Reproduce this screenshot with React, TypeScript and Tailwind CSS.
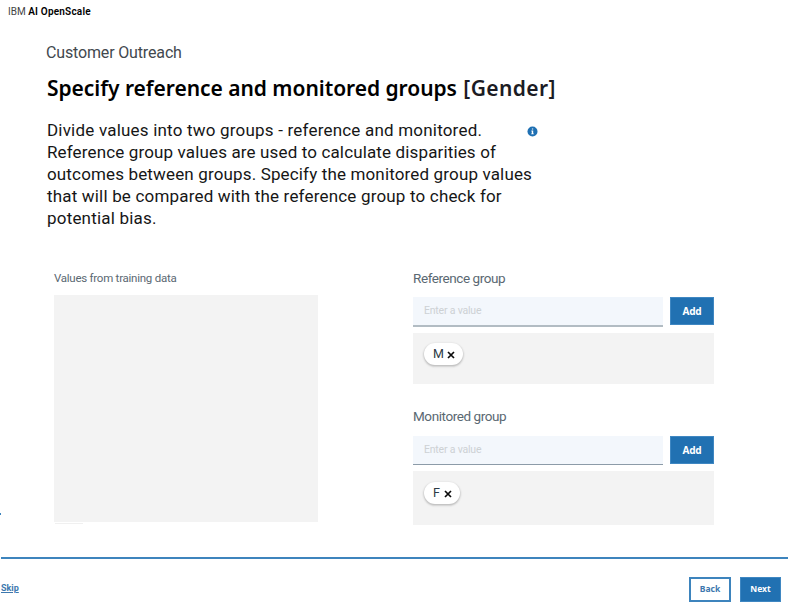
import React from "react";

const description = [
  { text: "Divide values into two groups - reference and monitored.", spacing: "tracking-[0.2px]" },
  { text: "Reference group values are used to calculate disparities of", spacing: "tracking-[0.14px]" },
  { text: "outcomes between groups. Specify the monitored group values", spacing: "tracking-[0.15px]" },
  { text: "that will be compared with the reference group to check for", spacing: "tracking-[0.18px]" },
  { text: "potential bias.", spacing: "tracking-[0.2px]" },
];

function InfoIcon() {
  return (
    <svg className="mt-[17px] ml-auto block" width="11" height="11" viewBox="0 0 11 11">
      <circle cx="5.5" cy="5.5" r="5" fill="#1f70b3" />
      <path d="M4.9 2.4h1.3v1.2H4.9zM4.4 4.6h1.8v2.9h.6v.8H4.2v-.8h.6V5.4h-.4z" fill="#fff" />
    </svg>
  );
}

function CloseIcon() {
  return (
    <svg className="mt-[2px] block shrink-0" width="8" height="8" viewBox="0 0 8 8">
      <path d="M1 1l6 6M7 1L1 7" stroke="#0b0b0b" strokeWidth="1.7" fill="none" />
    </svg>
  );
}

interface GroupProps {
  title: string;
  value: string;
  titleHeight: string;
  valueWidth: string;
  chip: string;
  inputHeight: string;
  line: string;
  panel: string;
}

function Group({ title, value, titleHeight, valueWidth, chip, inputHeight, line, panel }: GroupProps) {
  return (
    <section className="w-[301px]">
      <h2 className={`text-[13.5px] leading-[21px] tracking-[-0.42px] text-[#5a6872] ${titleHeight}`}>{title}</h2>
      <div className="flex h-[30px] justify-between">
        <div className={`w-[250px] bg-[#f3f7fc] pl-[11px] text-[10.5px] leading-[27px] tracking-[-0.2px] text-[#cdd1d4] ${inputHeight} ${line}`}>
          Enter a value
        </div>
        <button className="h-[28px] w-[44px] border border-[#3f87c2] bg-[#2171b2] font-['Noto_Sans',sans-serif] text-[10px] font-bold tracking-[-0.2px] text-white">
          Add
        </button>
      </div>
      <div className={`bg-[#f3f3f3] pl-[11px] ${panel}`}>
        <div className={`flex h-[22px] items-center rounded-full bg-white pl-[9px] shadow-[0_1px_2px_0.5px_#bdbdbd] ${chip}`}>
          <span className={`mb-px text-[12.5px] leading-[20px] text-[#2d3b45] ${valueWidth}`}>{value}</span>
          <CloseIcon />
        </div>
      </div>
    </section>
  );
}

export default function App() {
  return (
    <div className="relative flex h-[613px] w-[788px] flex-col overflow-hidden bg-white font-[Roboto,sans-serif] text-[#161616]">
      <header className="h-[42px] pt-[5px] pl-[8px] text-[10px] leading-[14px]">
        <span className="text-[#444]">IBM</span>{" "}
        <span className="font-semibold tracking-[0.2px] text-black">AI OpenScale</span>
      </header>

      <div className="h-[215px] pl-[46px]">
        <p className="h-[31px] text-[16px] leading-[21px] tracking-[-0.15px] text-[#42484e]">Customer Outreach</p>
        <h1 className="h-[36px] pl-px font-['Noto_Sans',sans-serif] text-[21px] leading-[31px] font-semibold tracking-[-0.04px] whitespace-nowrap text-black">
          Specify reference and monitored groups{" "}
          <span className="ml-px tracking-[0.4px] text-[#1c1c24]">[Gender]</span>
        </h1>
        <div className="flex w-[492px]">
          <p className="w-[480px] pt-[10px] pl-px text-[17px] leading-[22px] whitespace-nowrap">
            {description.map((l) => (
              <span key={l.text} className={`block ${l.spacing}`}>{l.text}</span>
            ))}
          </p>
          <InfoIcon />
        </div>
      </div>

      <main className="flex h-[300px] justify-between pt-[11px] pr-[74px] pl-[54px]">
        <section className="w-[264px]">
          <h2 className="h-[27px] text-[11.5px] leading-[21px] tracking-[-0.25px] text-[#5a6872]">Values from training data</h2>
          <div className="h-[227px] bg-[#f3f3f3]" />
          <div className="mt-px ml-px h-px w-[28px] bg-[#f0f0f0]" />
        </section>
        <div className="flex w-[301px] flex-col gap-[22px]">
          <Group
            title="Reference group"
            value="M"
            titleHeight="h-[29px]"
            valueWidth="w-[14px]"
            chip="w-[39px]"
            inputHeight="h-[30px]"
            line="border-b-2 border-[#b2bcc3]"
            panel="mt-[6px] h-[51px] pt-[10px]"
          />
          <Group
            title="Monitored group"
            value="F"
            titleHeight="h-[30px]"
            valueWidth="w-[11px]"
            chip="w-[36px]"
            inputHeight="h-[29px]"
            line="border-b border-[#8c9ba8]"
            panel="mt-[5px] h-[54px] pt-[11px]"
          />
        </div>
      </main>

      <footer className="ml-px flex h-[56px] justify-between border-t-2 border-[#3d84bd] pr-[7px]">
        <a className="mt-[22px] text-[9px] leading-[14px] font-bold text-[#3d78ae] underline">Skip</a>
        <div className="flex gap-[9px] pt-[18px] font-['Noto_Sans',sans-serif] text-[8.5px] font-bold">
          <button className="h-[25px] w-[42px] border-2 border-[#3d84bd] pb-px text-[#3d78ae]">Back</button>
          <button className="h-[25px] w-[41px] border border-[#3f87c2] bg-[#2171b2] pb-px text-white">Next</button>
        </div>
      </footer>
      <span className="absolute top-[513px] left-0 h-[2px] w-px bg-[#3d84bd]" />
    </div>
  );
}
